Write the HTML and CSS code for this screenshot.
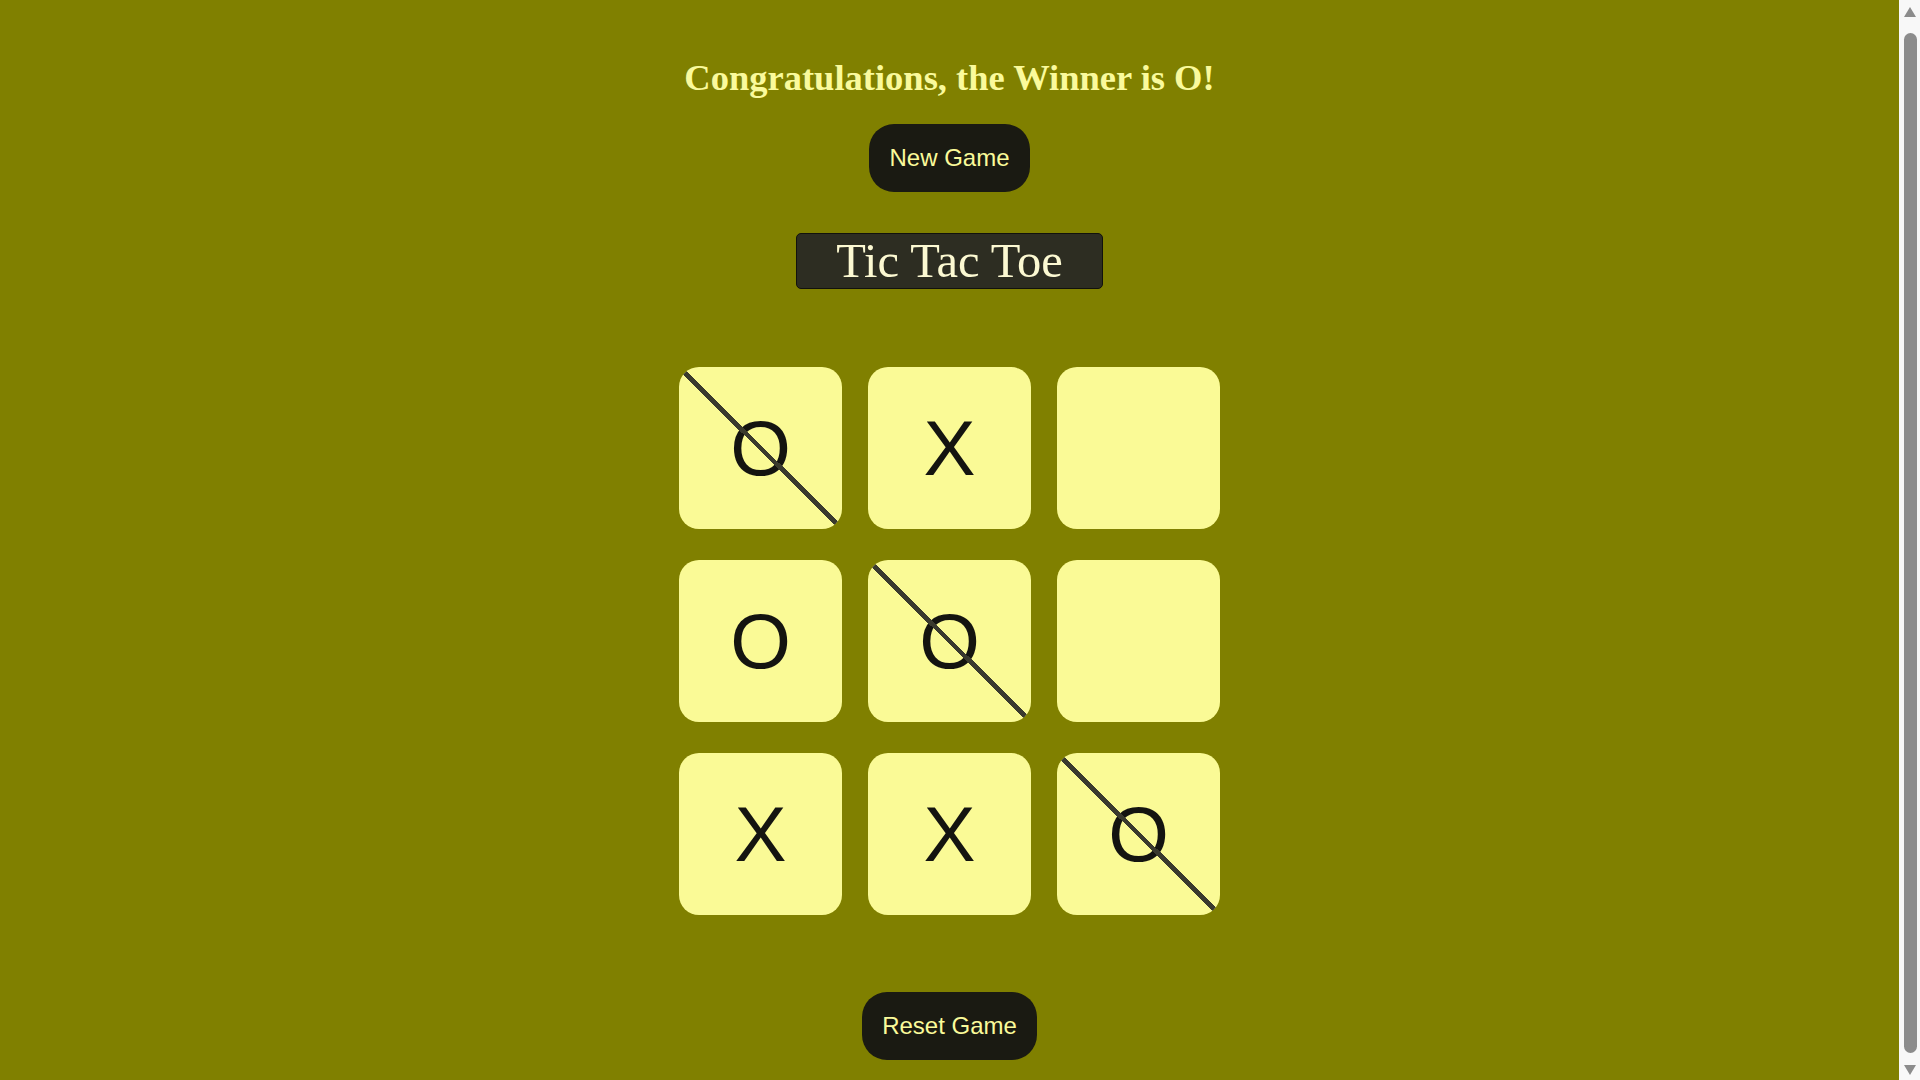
FILE: index.html
```html
<!DOCTYPE html>
<html lang="en">
<head>
<meta charset="utf-8">
<title>Tic Tac Toe</title>
<link rel="stylesheet" href="styles.css">
</head>
<body>
<div class="page">
  <main class="app">
    <h1 class="status">Congratulations, the Winner is O!</h1>
    <button class="btn new-game">New Game</button>
    <div class="title">Tic Tac Toe</div>
    <div class="board">
      <div class="cell win">O</div>
      <div class="cell">X</div>
      <div class="cell"></div>
      <div class="cell">O</div>
      <div class="cell win">O</div>
      <div class="cell"></div>
      <div class="cell">X</div>
      <div class="cell">X</div>
      <div class="cell win">O</div>
    </div>
    <button class="btn reset">Reset Game</button>
  </main>
  <div class="scrollbar" aria-hidden="true">
    <span class="arrow up"></span>
    <span class="thumb"></span>
    <span class="arrow down"></span>
  </div>
</div>
</body>
</html>
```
FILE: styles.css
```css
html {
  background: #808000;
}
body {
  margin: 0;
  background: #808000;
  font-family: "Liberation Serif", "Times New Roman", serif;
}
.page {
  display: flex;
  height: 100vh;
  overflow: hidden;
}
.app {
  flex: 1;
  display: flex;
  flex-direction: column;
  align-items: center;
  padding: 58px 0 0;
}
.status {
  margin: 0;
  font-size: 36.5px;
  line-height: 40px;
  font-weight: bold;
  color: #fafa9c;
}
.btn {
  font-family: "Liberation Sans", Arial, sans-serif;
  font-size: 24px;
  color: #fafa9a;
  background: #1a1a12;
  border: none;
  border-radius: 25px;
  padding: 20px;
  cursor: pointer;
}
.new-game {
  margin-top: 26px;
}
.title {
  margin-top: 41px;
  font-size: 48.5px;
  line-height: 54px;
  padding: 0 39px;
  color: #fcf9d2;
  background: #2d2d22;
  border: 1px solid #12120c;
  border-radius: 5px;
}
.board {
  margin-top: 78px;
  display: grid;
  grid-template-columns: repeat(3, 163px);
  grid-auto-rows: 162px;
  column-gap: 26px;
  row-gap: 31px;
}
.cell {
  position: relative;
  display: flex;
  align-items: center;
  justify-content: center;
  background: #fafa96;
  border-radius: 20px;
  overflow: hidden;
  font-family: "Liberation Sans", Arial, sans-serif;
  font-size: 78px;
  color: #141410;
}
.cell.win::after {
  content: "";
  position: absolute;
  inset: 0;
  background: linear-gradient(to top right, transparent calc(50% - 2.4px), #3a3a2e calc(50% - 2.4px), #3a3a2e calc(50% + 2.4px), transparent calc(50% + 2.4px));
}
.reset {
  margin-top: 77px;
}
.scrollbar {
  flex: none;
  width: 21px;
  background: #f8f8f8;
  display: flex;
  flex-direction: column;
  align-items: center;
  padding: 7px 0 5px;
  box-sizing: border-box;
}
.arrow {
  flex: none;
  width: 0;
  height: 0;
  border-left: 6.5px solid transparent;
  border-right: 6.5px solid transparent;
}
.arrow.up {
  border-bottom: 10px solid #8c8c8c;
}
.arrow.down {
  border-top: 10px solid #8c8c8c;
}
.thumb {
  flex: 1;
  width: 13px;
  margin: 16px 0 12px 1px;
  background: #8c8c8c;
  border-radius: 6.5px;
}
```
